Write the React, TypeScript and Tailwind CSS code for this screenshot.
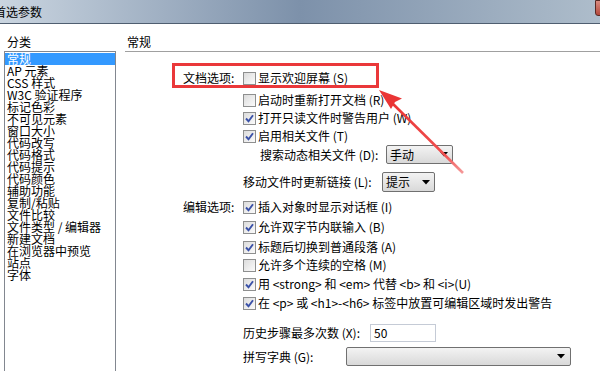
const font = { fontFamily: '"Noto Sans CJK SC", "Noto Sans", sans-serif' };

const categories = [
  "常规",
  "AP 元素",
  "CSS 样式",
  "W3C 验证程序",
  "标记色彩",
  "不可见元素",
  "窗口大小",
  "代码改写",
  "代码格式",
  "代码提示",
  "代码颜色",
  "辅助功能",
  "复制/粘贴",
  "文件比较",
  "文件类型 / 编辑器",
  "新建文档",
  "在浏览器中预览",
  "站点",
  "字体",
];

function Check({ checked }: { checked?: boolean }) {
  return (
    <span className="flex h-[13px] w-[13px] shrink-0 items-center justify-center border border-[#8e8f8f] bg-gradient-to-br from-[#dcdcdc] to-[#fbfbfb]">
      {checked && (
        <svg width="11" height="11" viewBox="0 0 11 11">
          <path d="M2 5.5 L4.5 8.2 L9 2.2" fill="none" stroke="#3a51a8" strokeWidth="1.9" />
        </svg>
      )}
    </span>
  );
}

function Caret() {
  return (
    <svg width="8" height="5" viewBox="0 0 8 5" className="shrink-0">
      <path d="M0 0 H8 L4 4.5 Z" fill="#000" />
    </svg>
  );
}

function CheckRow({
  label,
  checked,
  text,
  className,
}: {
  label?: string;
  checked?: boolean;
  text: string;
  className: string;
}) {
  return (
    <div className={`flex items-center ${className}`}>
      <span className="w-[118px] shrink-0 pl-[58px] leading-[12px]">{label}</span>
      <Check checked={checked} />
      <span className="ml-[2px] whitespace-nowrap leading-[12px]">{text}</span>
    </div>
  );
}

export default function App() {
  return (
    <div
      className="relative h-[384px] w-[600px] overflow-hidden bg-white text-[12px] text-black"
      style={font}
    >
      {/* Title bar */}
      <div className="flex h-[24px] items-center border-b border-[#4f5e70] bg-gradient-to-r from-[#cad5e0] via-[#7d91aa] to-[#aebdcb]">
        <span className="-ml-[6px] text-[12px] leading-[12px] text-black">首选参数</span>
        <div className="-mr-[36px] ml-auto h-[16px] w-[41px] self-start rounded-b-[3px] border border-[#5a2a24] bg-gradient-to-b from-[#d98b80] to-[#b4473b]" />
      </div>

      <div className="flex">
        {/* Category list */}
        <div className="w-[116px] shrink-0 pl-[4px]">
          <div className="h-[27px] pl-[3px] pt-[12px] leading-[12px]">分类</div>
          <div className="h-[320px] border border-b-0 border-[#828790] pt-[1px]">
            {categories.map((c, i) => (
              <div
                key={c}
                className={
                  i === 0
                    ? "h-[12px] whitespace-nowrap bg-[#3399ff] pl-[2px] leading-[12px] text-white"
                    : "h-[12px] whitespace-nowrap pl-[2px] leading-[12px]"
                }
              >
                {c}
              </div>
            ))}
          </div>
        </div>

        {/* Settings panel */}
        <div className="ml-[9px] flex-1">
          <div className="h-[28px] border-b border-[#a0a0a0] pl-[2px] pt-[12px] leading-[12px]">常规</div>

          <CheckRow className="mt-[17px] h-[18px]" label="文档选项:" text="显示欢迎屏幕 (S)" />
          <CheckRow className="mt-[4px] h-[18px]" text="启动时重新打开文档 (R)" />
          <CheckRow className="h-[18px]" checked text="打开只读文件时警告用户 (W)" />
          <CheckRow className="h-[18px]" checked text="启用相关文件 (T)" />

          <div className="flex h-[19px] items-center">
            <span className="w-[135px] shrink-0 whitespace-nowrap leading-[12px]"></span>
            <span className="w-[126px] shrink-0 whitespace-nowrap leading-[12px]">搜索动态相关文件 (D):</span>
            <div className="flex h-[19px] w-[67px] items-center justify-between rounded-[2px] border border-[#707070] bg-gradient-to-b from-[#f3f3f3] to-[#d9d9d9] pl-[3px] pr-[4px]">
              <span className="leading-[12px]">手动</span>
              <Caret />
            </div>
          </div>

          <div className="mt-[8px] flex h-[20px] items-center">
            <span className="w-[118px] shrink-0"></span>
            <span className="w-[139px] shrink-0 whitespace-nowrap leading-[12px]">移动文件时更新链接 (L):</span>
            <div className="flex h-[20px] w-[53px] items-center justify-between rounded-[2px] border border-[#707070] bg-gradient-to-b from-[#f3f3f3] to-[#d9d9d9] pl-[3px] pr-[4px]">
              <span className="leading-[12px]">提示</span>
              <Caret />
            </div>
          </div>

          <CheckRow className="mt-[6px] h-[18px]" label="编辑选项:" checked text="插入对象时显示对话框 (I)" />
          <CheckRow className="mt-[2px] h-[18px]" checked text="允许双字节内联输入 (B)" />
          <CheckRow className="mt-[2px] h-[18px]" checked text="标题后切换到普通段落 (A)" />
          <CheckRow className="h-[18px]" text="允许多个连续的空格 (M)" />
          <CheckRow className="mt-[1px] h-[18px]" checked text="用 <strong> 和 <em> 代替 <b> 和 <i>(U)" />
          <CheckRow className="mt-[1px] h-[18px]" checked text="在 <p> 或 <h1>-<h6> 标签中放置可编辑区域时发出警告" />

          <div className="mt-[12px] flex h-[18px] items-center">
            <span className="w-[118px] shrink-0"></span>
            <span className="w-[127px] shrink-0 whitespace-nowrap leading-[12px]">历史步骤最多次数 (X):</span>
            <div className="flex h-[18px] w-[66px] items-center border border-[#c5cbd6] bg-white pl-[3px] leading-[12px]">50</div>
          </div>

          <div className="mt-[5px] flex h-[19px] items-center">
            <span className="w-[118px] shrink-0"></span>
            <span className="w-[103px] shrink-0 whitespace-nowrap leading-[12px]">拼写字典 (G):</span>
            <div className="flex h-[19px] w-[225px] items-center justify-end rounded-[2px] border border-[#707070] bg-gradient-to-b from-[#f3f3f3] to-[#d9d9d9] pr-[5px]">
              <Caret />
            </div>
          </div>
        </div>
      </div>

      {/* Annotation: red box + arrow */}
      <div className="pointer-events-none absolute left-[172px] top-[63px] h-[25px] w-[207px] border-[3px] border-[#ea383a]" />
      <svg className="pointer-events-none absolute left-0 top-0" width="600" height="384" viewBox="0 0 600 384">
        <defs>
          <linearGradient id="tail" gradientUnits="userSpaceOnUse" x1="463" y1="173" x2="392" y2="102">
            <stop offset="0" stopColor="#f59a9a" />
            <stop offset="0.25" stopColor="#f05050" />
            <stop offset="1" stopColor="#ea3535" />
          </linearGradient>
        </defs>
        <line x1="463" y1="173" x2="390" y2="101" stroke="url(#tail)" strokeWidth="2.6" />
        <path d="M379 90 L402 98.5 L395 102 L391 109 Z" fill="#ea3535" />
      </svg>
    </div>
  );
}
